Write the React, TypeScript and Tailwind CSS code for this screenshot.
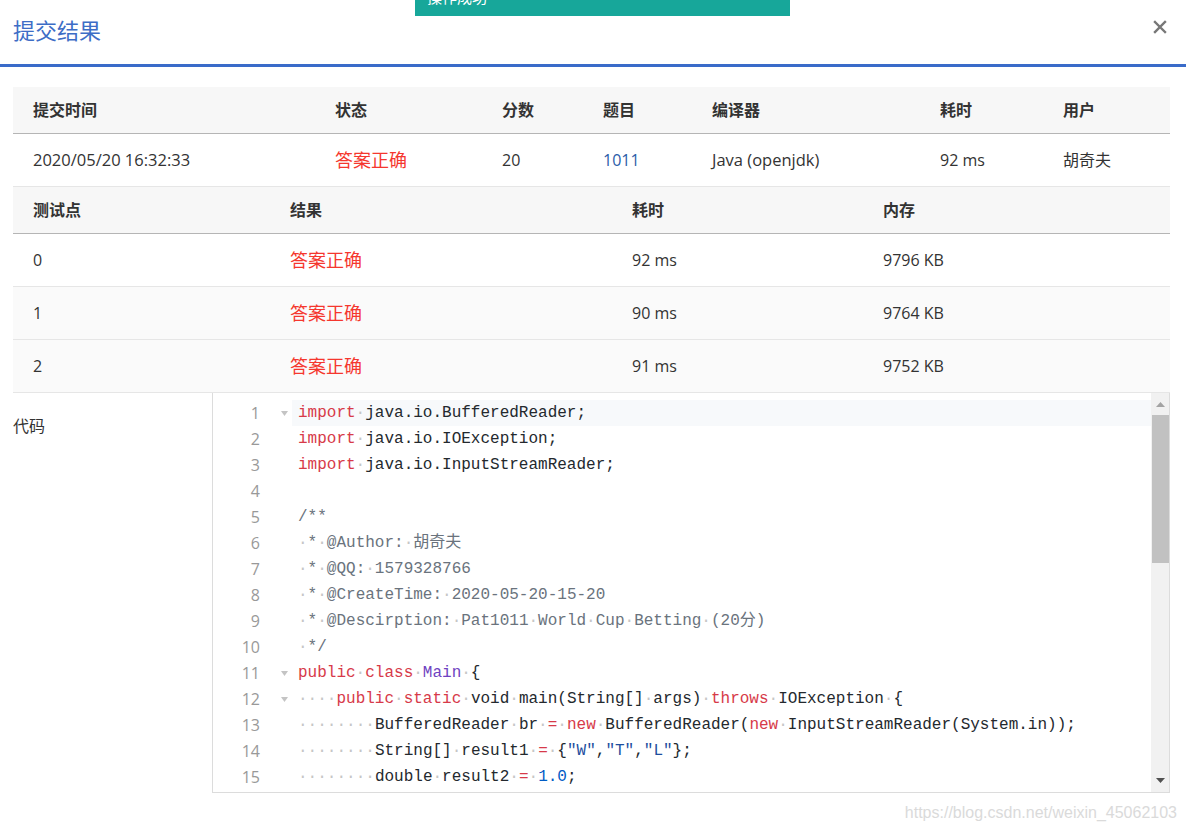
import React from 'react'

type Tok = [string, string?]

const C = {
  kw: '#d73a49',
  cls: '#6f42c1',
  str: '#1d4e9e',
  num: '#005cc5',
  cm: '#6a737d',
  tx: '#24292e',
}

const lines: { toks: Tok[]; fold?: boolean }[] = [
  { fold: true, toks: [['import', C.kw], [' java.io.BufferedReader;']] },
  { toks: [['import', C.kw], [' java.io.IOException;']] },
  { toks: [['import', C.kw], [' java.io.InputStreamReader;']] },
  { toks: [] },
  { toks: [['/**', C.cm]] },
  { toks: [[' * @Author: 胡奇夫', C.cm]] },
  { toks: [[' * @QQ: 1579328766', C.cm]] },
  { toks: [[' * @CreateTime: 2020-05-20-15-20', C.cm]] },
  { toks: [[' * @Descirption: Pat1011 World Cup Betting (20分)', C.cm]] },
  { toks: [[' */', C.cm]] },
  { fold: true, toks: [['public', C.kw], [' '], ['class', C.kw], [' '], ['Main', C.cls], [' {']] },
  {
    fold: true,
    toks: [['    '], ['public', C.kw], [' '], ['static', C.kw], [' void main(String[] args) '], ['throws', C.kw], [' IOException {']],
  },
  {
    toks: [['        BufferedReader br '], ['=', C.kw], [' '], ['new', C.kw], [' BufferedReader('], ['new', C.kw], [' InputStreamReader(System.in));']],
  },
  {
    toks: [['        String[] result1 '], ['=', C.kw], [' {'], ['"W"', C.str], [','], ['"T"', C.str], [','], ['"L"', C.str], ['};']],
  },
  { toks: [['        double result2 '], ['=', C.kw], [' '], ['1.0', C.num], [';']] },
]

// spaces drawn as grey middle dots, like the editor's "show invisibles"
function Token({ text, color }: { text: string; color?: string }) {
  const parts = text.split(/( )/)
  return (
    <>
      {parts.map((p, i) =>
        p === ' ' ? (
          <span key={i} className="text-[#c6c6c6]">·</span>
        ) : p ? (
          <span key={i} style={{ color: color ?? C.tx }}>{p}</span>
        ) : null
      )}
    </>
  )
}

const head1 = ['提交时间', '状态', '分数', '题目', '编译器', '耗时', '用户']
const head2 = ['测试点', '结果', '耗时', '内存']
const cases = [
  ['0', '92 ms', '9796 KB'],
  ['1', '90 ms', '9764 KB'],
  ['2', '91 ms', '9752 KB'],
]

const grid1 = 'grid grid-cols-[302px_167px_101px_109px_228px_123px_127px]'
const grid2 = 'grid grid-cols-[257px_342px_251px_307px]'
const cell = 'pl-[20px] flex items-center'
const red = 'text-[#f5372e] text-[18px]'

export default function App() {
  return (
    <div className="relative w-[1186px] h-[830px] overflow-hidden bg-white text-[#333] font-['Open_Sans','Noto_Sans_CJK_SC',sans-serif]">
      {/* toast peeking in from the top */}
      <div className="absolute left-[415px] top-0 w-[375px] h-[16px] bg-[#17a79a] overflow-hidden">
        <div className="absolute left-[12px] top-[-13px] text-[15px] leading-[20px] text-white">操作成功</div>
      </div>

      <div className="flex items-center justify-between h-[67px] pl-[13px] pr-[19px] pb-[3px] border-b-[3px] border-[#3a6bc9]">
        <h1 className="text-[22px] text-[#3d6dc6] font-normal">提交结果</h1>
        <svg width="14" height="14" viewBox="0 0 14 14" className="mb-[8px]">
          <path d="M2 2 L12 12 M12 2 L2 12" stroke="#777" strokeWidth="2.4" strokeLinecap="square" />
        </svg>
      </div>

      <div className="pl-[13px] pr-[16px] pt-[20px] text-[16px]">
        <div className={`${grid1} h-[47px] bg-[#f7f7f7] border-b border-[#b5b5b5] font-semibold`}>
          {head1.map((h) => (
            <div key={h} className={cell}>{h}</div>
          ))}
        </div>
        <div className={`${grid1} h-[53px] border-b border-[#e6e6e6]`}>
          <div className={`${cell} text-[16.5px]`}>2020/05/20 16:32:33</div>
          <div className={`${cell} ${red}`}>答案正确</div>
          <div className={cell}>20</div>
          <div className={`${cell} text-[#2b5ca8]`}>1011</div>
          <div className={`${cell} text-[16.5px]`}>Java (openjdk)</div>
          <div className={cell}>92 ms</div>
          <div className={cell}>胡奇夫</div>
        </div>

        <div className={`${grid2} h-[47px] bg-[#f7f7f7] border-b border-[#b5b5b5] font-semibold`}>
          {head2.map((h) => (
            <div key={h} className={cell}>{h}</div>
          ))}
        </div>
        {cases.map(([n, t, m], i) => (
          <div key={n} className={`${grid2} h-[53px] border-b border-[#e6e6e6] ${i > 0 ? 'bg-[#fafafa]' : ''}`}>
            <div className={cell}>{n}</div>
            <div className={`${cell} ${red}`}>答案正确</div>
            <div className={cell}>{t}</div>
            <div className={cell}>{m}</div>
          </div>
        ))}

        <div className="flex">
          <div className="w-[199px] pt-[21px] leading-[24px]">代码</div>
          <div className="flex w-[958px] h-[400px] border border-[#dcdcdc] border-t-0 bg-white overflow-hidden">
            <div className="flex-1 pt-[7px]">
              {lines.map((l, i) => (
                <div key={i} className="flex h-[26px] items-center">
                  <div className="w-[47px] text-right text-[16px] text-[#999] font-['Open_Sans',sans-serif]">{i + 1}</div>
                  <div className="w-[32px] h-full flex items-center pl-[21px]">
                    {l.fold && (
                      <svg width="7" height="5" viewBox="0 0 7 5">
                        <path d="M0 0 H7 L3.5 5 Z" fill="#c4c4c4" />
                      </svg>
                    )}
                  </div>
                  <div
                    className={`flex-1 h-full flex items-center pl-[6px] whitespace-pre text-[16px] font-['Liberation_Mono','Noto_Sans_CJK_SC',monospace] ${
                      i === 0 ? 'bg-[#f7f9fb]' : ''
                    }`}
                  >
                    {l.toks.map(([t, c], j) => (
                      <Token key={j} text={t} color={c} />
                    ))}
                  </div>
                </div>
              ))}
            </div>
            <div className="w-[18px] bg-[#f1f1f1] flex flex-col items-center">
              <div className="h-[22px] flex items-center justify-center">
                <svg width="9" height="5" viewBox="0 0 9 5">
                  <path d="M0 5 H9 L4.5 0 Z" fill="#a3a3a3" />
                </svg>
              </div>
              <div className="w-[17px] h-[148px] bg-[#c1c1c1]" />
              <div className="flex-1" />
              <div className="h-[24px] flex items-center justify-center">
                <svg width="9" height="5" viewBox="0 0 9 5">
                  <path d="M0 0 H9 L4.5 5 Z" fill="#505050" />
                </svg>
              </div>
            </div>
          </div>
        </div>
      </div>

      <div className="absolute right-[9px] top-[801px] text-[16px] text-[#dadada] font-['Liberation_Sans',sans-serif]">
        https://blog.csdn.net/weixin_45062103
      </div>
    </div>
  )
}
